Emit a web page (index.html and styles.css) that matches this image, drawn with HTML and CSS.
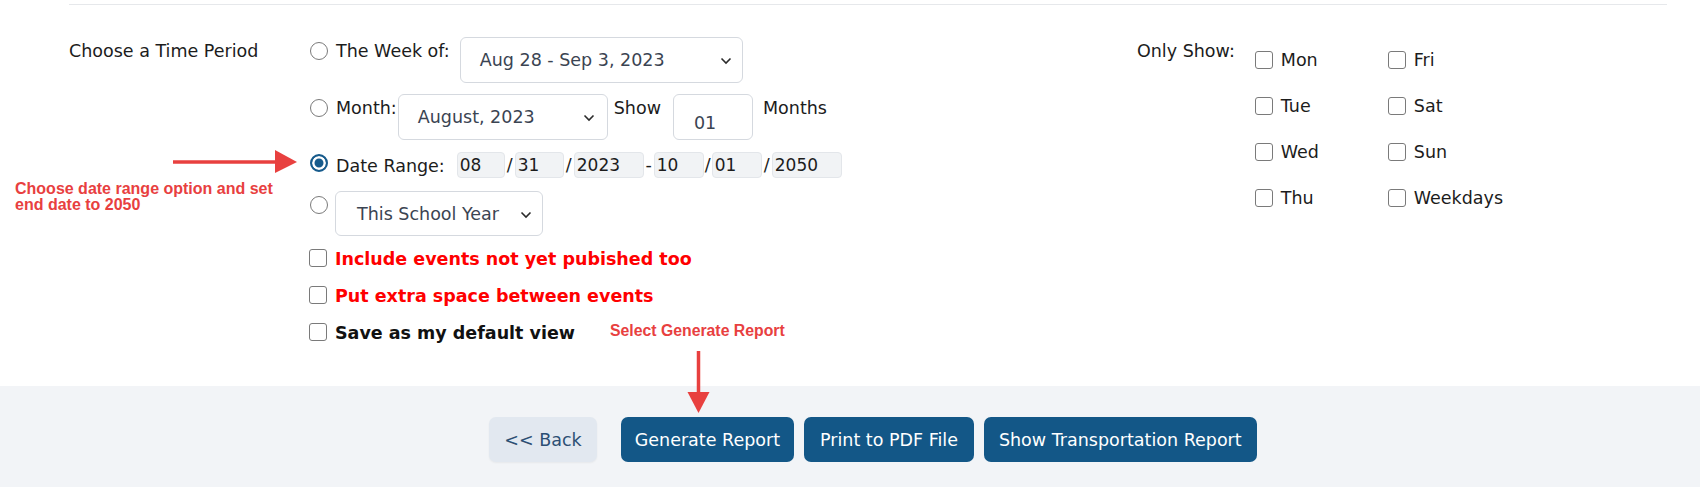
FILE: index.html
```html
<!DOCTYPE html>
<html lang="en">
<head>
<meta charset="utf-8">
<title>Report Options</title>
<link rel="stylesheet" href="styles.css">
</head>
<body>
<div class="page">
  <div class="rule"></div>
  <div class="form">
    <div class="label-col">Choose a Time Period</div>

    <div class="period">
      <div class="row row-week">
        <input type="radio" name="period" class="radio">
        <span class="lbl">The Week of:</span>
        <div class="select sel-week"><span>Aug 28 - Sep 3, 2023</span><svg class="chev" width="12" height="8" viewBox="0 0 12 8"><path d="M1.5 1.5 L6 6 L10.5 1.5" fill="none" stroke="#2b2b2b" stroke-width="1.6"/></svg></div>
      </div>

      <div class="row row-month">
        <input type="radio" name="period" class="radio">
        <span class="lbl">Month:</span>
        <div class="select sel-month"><span>August, 2023</span><svg class="chev" width="12" height="8" viewBox="0 0 12 8"><path d="M1.5 1.5 L6 6 L10.5 1.5" fill="none" stroke="#2b2b2b" stroke-width="1.6"/></svg></div>
        <span class="show">Show</span>
        <input class="num" type="text" value="01">
        <span class="months">Months</span>
      </div>

      <div class="row row-date">
        <input type="radio" name="period" class="radio radio-date" checked>
        <span class="lbl">Date Range:</span>
        <div class="dates">
          <input class="date w48" type="text" value="08"><span class="sep">/</span>
          <input class="date w49" type="text" value="31"><span class="sep">/</span>
          <input class="date w70" type="text" value="2023"><span class="sep">-</span>
          <input class="date w50" type="text" value="10"><span class="sep sep-s">/</span>
          <input class="date w50" type="text" value="01"><span class="sep">/</span>
          <input class="date w70" type="text" value="2050">
        </div>
      </div>

      <div class="row row-school">
        <input type="radio" name="period" class="radio">
        <div class="select sel-school"><span>This School Year</span><svg class="chev" width="12" height="8" viewBox="0 0 12 8"><path d="M1.5 1.5 L6 6 L10.5 1.5" fill="none" stroke="#2b2b2b" stroke-width="1.6"/></svg></div>
      </div>

      <label class="row opt opt-first"><input type="checkbox" class="cb"><span class="opt-text red">Include events not yet pubished too</span></label>
      <label class="row opt"><input type="checkbox" class="cb"><span class="opt-text red">Put extra space between events</span></label>
      <label class="row opt"><input type="checkbox" class="cb"><span class="opt-text">Save as my default view</span></label>
    </div>

    <div class="days">
      <span class="only">Only Show:</span>
      <div class="daygrid">
        <label class="day"><input type="checkbox" class="cb"><span>Mon</span></label>
        <label class="day"><input type="checkbox" class="cb"><span>Fri</span></label>
        <label class="day"><input type="checkbox" class="cb"><span>Tue</span></label>
        <label class="day"><input type="checkbox" class="cb"><span>Sat</span></label>
        <label class="day"><input type="checkbox" class="cb"><span>Wed</span></label>
        <label class="day"><input type="checkbox" class="cb"><span>Sun</span></label>
        <label class="day"><input type="checkbox" class="cb"><span>Thu</span></label>
        <label class="day"><input type="checkbox" class="cb"><span>Weekdays</span></label>
      </div>
    </div>
  </div>

  <div class="footer">
    <button class="btn btn-back">&lt;&lt; Back</button>
    <button class="btn btn-gen">Generate Report</button>
    <button class="btn btn-pdf">Print to PDF File</button>
    <button class="btn btn-trans">Show Transportation Report</button>
  </div>

  <div class="note note-range">Choose date range option and set<br>end date to 2050</div>
  <svg class="arrow arrow-right" width="126" height="25" viewBox="0 0 126 25">
    <line x1="1" y1="13" x2="106" y2="13" stroke="#e8403f" stroke-width="3.5"/>
    <polygon points="103,1 125,13 103,24" fill="#e8403f"/>
  </svg>
  <div class="note note-gen">Select Generate Report</div>
  <svg class="arrow arrow-down" width="23" height="64" viewBox="0 0 23 64">
    <line x1="11.5" y1="1" x2="11.5" y2="45" stroke="#e8403f" stroke-width="3.5"/>
    <polygon points="0.5,42 22.5,42 11.5,63" fill="#e8403f"/>
  </svg>
</div>
</body>
</html>
```

FILE: styles.css
```css
* {
  box-sizing: border-box;
}

html, body {
  margin: 0;
  padding: 0;
  background: #ffffff;
}

body {
  font-family: "DejaVu Sans", Verdana, sans-serif;
  font-size: 17.5px;
  color: #1c1c1c;
}

.page {
  position: relative;
  width: 1700px;
  height: 487px;
  overflow: hidden;
}

.rule {
  margin: 4px 33px 0 69px;
  border-top: 1px solid #e6e8eb;
}

.form {
  display: grid;
  grid-template-columns: 240px 1fr 530px;
  padding: 32px 33px 39px 69px;
  line-height: 28px;
}

.label-col {
  white-space: nowrap;
}

.period {
  display: flex;
  flex-direction: column;
}

.row {
  display: flex;
  align-items: flex-start;
  white-space: nowrap;
}

.row-month { margin-top: 11px; }
.row-date { margin-top: 12px; }
.row-school { margin-top: 11px; }

.radio {
  -webkit-appearance: none;
  appearance: none;
  flex: none;
  width: 18px;
  height: 18px;
  margin: 5px 0 0 1px;
  border: 1px solid #7a7a7a;
  border-radius: 50%;
  background: #ffffff;
}

.radio:checked {
  border: 2px solid #175b8c;
  background: #175b8c;
  box-shadow: inset 0 0 0 2.5px #ffffff;
}

.radio-date {
  margin-top: 2px;
}

.lbl {
  margin-left: 8px;
}

.select {
  flex: none;
  display: flex;
  align-items: center;
  justify-content: space-between;
  height: 46px;
  border: 1px solid #d5d9df;
  border-radius: 6px;
  background: #ffffff;
  color: #3b4452;
  padding: 0 10px 0 19px;
}

.chev {
  flex: none;
  margin-top: 2px;
}

.sel-week {
  width: 283px;
  margin-left: 10px;
}

.sel-month {
  width: 210px;
  margin-left: 1px;
  padding-right: 12px;
}

.sel-school {
  width: 208px;
  height: 45px;
  margin-left: 7px;
  padding-left: 21px;
}

.show {
  margin-left: 6px;
}

.num {
  flex: none;
  width: 80px;
  height: 46px;
  margin: 0 0 0 12px;
  padding: 12px 0 0 20px;
  border: 1px solid #d5d9df;
  border-radius: 6px;
  font: inherit;
  color: #3b4452;
  line-height: 28px;
  outline: none;
}

.months {
  margin-left: 10px;
}

.dates {
  display: flex;
  align-items: flex-start;
  margin-left: 12px;
}

.date {
  flex: none;
  height: 26px;
  margin: 0;
  padding: 0 0 0 2px;
  border: 1px solid #e3e6ea;
  border-radius: 4px;
  background: #f1f3f5;
  font-family: "DejaVu Sans", Verdana, sans-serif;
  font-size: 17px;
  color: #1c1c1c;
  outline: none;
}

.w48 { width: 48px; }
.w49 { width: 49px; }
.w50 { width: 50px; }
.w70 { width: 70px; }

.sep {
  flex: none;
  width: 10px;
  text-align: center;
  line-height: 26px;
}

.sep-s {
  width: 8px;
}

.opt {
  margin-top: 9px;
  cursor: default;
}

.cb {
  -webkit-appearance: none;
  appearance: none;
  flex: none;
  width: 18px;
  height: 18px;
  margin: 0;
  border: 1px solid #7a7a7a;
  border-radius: 3px;
  background: #ffffff;
}

.opt .cb {
  margin-top: 4px;
}

.opt-text {
  margin-left: 8px;
  font-weight: bold;
  color: #111111;
}

.opt-text.red {
  color: #ff0000;
}

.days {
  display: flex;
  align-items: flex-start;
}

.only {
  white-space: nowrap;
}

.daygrid {
  display: grid;
  grid-template-columns: 133px auto;
  row-gap: 18px;
  margin: 9px 0 0 20px;
}

.day {
  display: flex;
  align-items: center;
  height: 28px;
  white-space: nowrap;
}

.day .cb {
  margin-right: 8px;
}

.footer {
  display: flex;
  justify-content: center;
  align-items: flex-start;
  height: 101px;
  padding: 31px 0 0 46px;
  background: #f2f4f7;
}

.btn {
  flex: none;
  height: 45px;
  margin: 0 0 0 10px;
  padding: 0 14px;
  border: 0;
  border-radius: 7px;
  background: #135787;
  color: #ffffff;
  font-family: "DejaVu Sans", Verdana, sans-serif;
  font-size: 17.5px;
  white-space: nowrap;
}

.btn-back {
  margin: 0 24px 0 0;
  padding: 0 15px;
  background: #e2e8f0;
  color: #2c4f74;
  box-shadow: 0 1px 2px rgba(0, 0, 0, 0.05);
}

.btn-gen {
  margin-left: 0;
}

.btn-pdf {
  padding: 0 16px;
}

.btn-trans {
  padding: 0 15px;
}

.note {
  position: absolute;
  color: #e8403f;
  font-family: "Liberation Sans", Arial, sans-serif;
  font-weight: bold;
  white-space: nowrap;
}

.note-range {
  left: 15px;
  top: 181px;
  font-size: 16px;
  line-height: 16px;
}

.note-gen {
  left: 610px;
  top: 323px;
  font-family: "Liberation Sans Narrow", "Liberation Sans", Arial, sans-serif;
  font-size: 15.8px;
  line-height: 16px;
}

.arrow {
  position: absolute;
}

.arrow-right {
  left: 172px;
  top: 149px;
}

.arrow-down {
  left: 687px;
  top: 350px;
}
```
